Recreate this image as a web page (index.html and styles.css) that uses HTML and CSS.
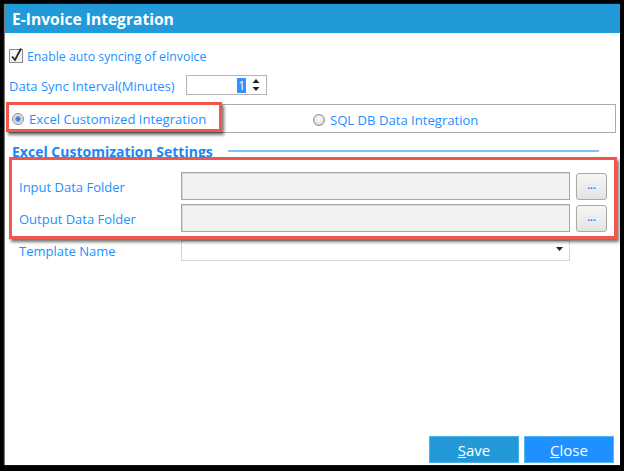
FILE: index.html
```html
<!DOCTYPE html>
<html>
<head>
<meta charset="utf-8">
<link rel="stylesheet" href="styles.css">
</head>
<body>
<div class="window">
  <div class="titlebar">E-Invoice Integration</div>
  <div class="content">
    <div class="check-row">
      <span class="checkbox">
        <svg width="15" height="16" viewBox="0 0 15 16"><rect x="0.5" y="2.5" width="13" height="13" fill="#f4f4f4" stroke="#8a8a8a"/><path d="M3 9.5 L6 13 L12 1.5" fill="none" stroke="#2a2a2a" stroke-width="1.8"/></svg>
      </span>
      <span class="blue-text enable-text">Enable auto syncing of eInvoice</span>
    </div>
    <div class="interval-row">
      <span class="blue-text interval-label">Data Sync Interval(Minutes)</span>
      <div class="spin">
        <span class="spin-val">1</span>
        <span class="spin-arrows">
          <svg width="8" height="14" viewBox="0 0 8 14"><path d="M0.5 5 L4 1 L7.5 5 Z" fill="#222"/><path d="M0.5 9 L4 13 L7.5 9 Z" fill="#222"/></svg>
        </span>
      </div>
    </div>
    <div class="group">
      <div class="radio-item highlight-radio"><span class="radio checked"></span><span class="blue-text">Excel Customized Integration</span></div>
      <div class="radio-item second"><span class="radio"></span><span class="blue-text">SQL DB Data Integration</span></div>
    </div>
    <div class="section-head"><span class="section-title">Excel Customization Settings</span><span class="rule"></span></div>
    <div class="folders">
      <div class="field-row">
        <span class="blue-text field-label">Input Data Folder</span>
        <div class="path-input"></div>
        <div class="browse">...</div>
      </div>
      <div class="field-row">
        <span class="blue-text field-label">Output Data Folder</span>
        <div class="path-input"></div>
        <div class="browse">...</div>
      </div>
    </div>
    <div class="template-row">
      <span class="blue-text field-label">Template Name</span>
      <div class="combo">
        <svg width="7" height="4" viewBox="0 0 7 4"><path d="M0 0 L7 0 L3.5 4 Z" fill="#222"/></svg>
      </div>
    </div>
  </div>
  <div class="footer">
    <div class="btn save"><u>S</u>ave</div>
    <div class="btn close"><u>C</u>lose</div>
  </div>
</div>
</body>
</html>
```
FILE: styles.css
```css
html, body {
  margin: 0;
  padding: 0;
}
body {
  background: #000;
  width: 624px;
  height: 471px;
  overflow: hidden;
  font-family: "Open Sans", "Noto Sans", sans-serif;
  font-size: 12px;
}
.window {
  margin: 4px 0 0 5px;
  width: 615px;
  height: 461px;
  background: #fff;
  display: flex;
  flex-direction: column;
  box-shadow: -1px 0 1px #777;
}
.titlebar {
  height: 29px;
  background: #229ad9;
  color: #fff;
  font-weight: bold;
  font-size: 15.6px;
  line-height: 31px;
  padding-left: 7px;
}
.content {
  padding-left: 4px;
  display: flex;
  flex-direction: column;
}
.blue-text {
  color: #1e90ff;
  white-space: nowrap;
}
.check-row {
  margin-top: 14px;
  height: 16px;
  display: flex;
  align-items: center;
}
.checkbox {
  width: 18px;
  height: 16px;
  display: flex;
  align-items: flex-end;
}
.enable-text {
  margin-top: 2px;
  font-size: 12.3px;
}
.interval-row {
  margin-top: 12px;
  height: 20px;
  display: flex;
  align-items: center;
}
.interval-label {
  width: 177px;
  font-size: 13px;
  padding-top: 2px;
}
.spin {
  box-sizing: border-box;
  width: 81px;
  height: 20px;
  border: 1px solid #b4b4b4;
  display: flex;
  align-items: center;
  justify-content: flex-end;
  padding-right: 6px;
}
.spin-val {
  background: #3390ff;
  color: #fff;
  font-size: 12px;
  line-height: 15px;
  padding: 0 1px;
  margin-right: 6px;
}
.spin-arrows {
  display: flex;
}
.group {
  box-sizing: border-box;
  margin-top: 9px;
  margin-left: -1px;
  margin-right: 4px;
  height: 29px;
  border: 1px solid #aaaab4;
  display: flex;
  align-items: flex-start;
}
.radio-item {
  display: flex;
  align-items: center;
  font-size: 13.1px;
}
.radio {
  box-sizing: border-box;
  width: 12px;
  height: 12px;
  border-radius: 50%;
  border: 1px solid #8d8d8d;
  background: radial-gradient(circle at 50% 40%, #ffffff 0, #e4e4e4 55%, #c8c8c8 100%);
  margin-right: 5px;
}
.radio.checked {
  background: radial-gradient(circle, #3b6fd0 0, #5d8fe0 30%, #c9d6ec 45%, #e6e6e6 70%, #cfcfcf 100%);
}
.highlight-radio {
  box-sizing: border-box;
  position: relative;
  margin: -3px 0 0 -3px;
  width: 216px;
  height: 30px;
  border: 3px solid #f0564c;
  box-shadow: 2px 3px 3px rgba(0, 0, 0, 0.55);
  padding: 3px 0 0 3px;
}
.second {
  margin-left: 91px;
  height: 27px;
  padding-top: 2px;
  box-sizing: border-box;
}
.section-head {
  margin-top: 10px;
  height: 16px;
  display: flex;
  align-items: center;
}
.section-title {
  color: #1e86f0;
  font-weight: bold;
  font-size: 14px;
  line-height: 16px;
  margin-left: 3px;
  white-space: nowrap;
  padding-top: 1px;
}
.rule {
  margin-left: 15px;
  width: 371px;
  height: 2px;
  background: #82c3f5;
}
.folders {
  position: relative;
  box-sizing: border-box;
  margin-top: -2px;
  margin-right: 3px;
  height: 82px;
  border: 3px solid #f0564c;
  box-shadow: 2px 3px 3px rgba(0, 0, 0, 0.55);
  padding: 12px 7px 0 7px;
  display: flex;
  flex-direction: column;
  gap: 4px;
}
.field-row {
  display: flex;
  align-items: center;
  height: 28px;
}
.field-label {
  width: 162px;
  font-size: 13px;
  padding-top: 1px;
}
.path-input {
  box-sizing: border-box;
  width: 389px;
  height: 28px;
  background: #f2f2f3;
  border: 1px solid #a6a6a6;
  box-shadow: inset 1px 1px 0 #d8d8d8;
}
.browse {
  box-sizing: border-box;
  margin-left: 6px;
  width: 31px;
  height: 27px;
  border: 1px solid #a9a9a9;
  border-radius: 3px;
  background: linear-gradient(#f6f6f6, #e3e3e3);
  color: #2a7de0;
  font-size: 10px;
  font-weight: bold;
  display: flex;
  align-items: center;
  justify-content: center;
  padding-bottom: 2px;
}
.template-row {
  margin-top: 1px;
  padding-left: 10px;
  display: flex;
  align-items: center;
  height: 21px;
}
.combo {
  box-sizing: border-box;
  width: 389px;
  height: 21px;
  border: 1px solid #d4d4d4;
  display: flex;
  align-items: center;
  justify-content: flex-end;
  padding-right: 6px;
  padding-bottom: 3px;
}
.footer {
  margin-top: auto;
  display: flex;
  justify-content: flex-end;
  gap: 5px;
  padding: 0 6px 2px 0;
}
.btn {
  box-sizing: border-box;
  width: 90px;
  height: 27px;
  color: #fff;
  font-size: 15px;
  display: flex;
  align-items: center;
  justify-content: center;
}
.btn u {
  text-decoration-thickness: 1px;
}
.save {
  background: #2399d8;
  border: 1px solid #4bb2ea;
}
.close {
  background: #1e90ff;
  border: 1px solid #52b9f0;
}
```
